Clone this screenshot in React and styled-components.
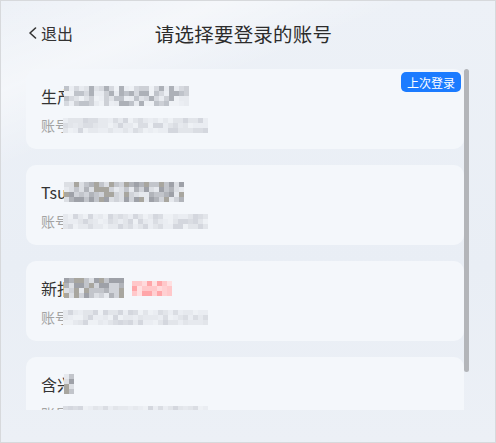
import styled, { createGlobalStyle } from 'styled-components'

const GlobalStyle = createGlobalStyle`
body{
  margin:0;
  font-family:"Noto Sans CJK SC", "Noto Sans", sans-serif;
}
`

const Frame = styled.div`
width:496px;
height:443px;
box-sizing:border-box;
border:1px solid #d7d9dc;
overflow:hidden;
background:
  linear-gradient(158deg, rgba(255,255,255,0) 0%, rgba(255,255,255,0.45) 14%, rgba(255,255,255,0) 26%),
  linear-gradient(180deg, #edf1f7 0%, #e9eef5 60%, #ecf0f6 100%);
`

const Header = styled.div`
height:68px;
box-sizing:border-box;
padding:0 36px 4px 27px;
display:grid;
grid-template-columns:1fr auto 1fr;
align-items:center;
`

const Back = styled.div`
display:flex;
align-items:center;
gap:4px;
font-size:16px;
color:#333;
svg{ display:block; }
`

const Title = styled.div`
font-size:19.5px;
color:#2c2c2c;
letter-spacing:0.2px;
`

const ListArea = styled.div`
margin-left:25px;
display:flex;
height:341px;
`

const Cards = styled.div`
width:438px;
overflow:hidden;
display:flex;
flex-direction:column;
gap:16px;
`

const ScrollTrack = styled.div`
width:5px;
flex:0 0 5px;
`

const ScrollThumb = styled.div`
height:303px;
border-radius:3px;
background:#b3b5b9;
`

const Card = styled.div`
position:relative;
flex:0 0 80px;
box-sizing:border-box;
padding:16px 15px 0;
border-radius:10px;
background:#f4f7fb;
`

const Badge = styled.span`
position:absolute;
top:3px;
right:3px;
height:20px;
padding:0 6px;
display:flex;
align-items:center;
border-radius:5px;
background:#1b7bff;
color:#fff;
font-size:12px;
`

const Name = styled.div`
display:flex;
align-items:center;
height:22px;
font-size:16px;
line-height:22px;
color:#333;
white-space:nowrap;
`

const Account = styled.div`
display:flex;
align-items:center;
margin-top:8px;
height:20px;
font-size:14px;
line-height:20px;
color:#a3a3a3;
white-space:nowrap;
`

const Mosaic = styled.span`
display:inline-block;
flex:none;
margin-left:${p => p.$pull || 0}px;
width:${p => p.$cols * 5}px;
height:${p => p.$rows * 5}px;
background-repeat:no-repeat;
filter:blur(0.7px);
`

// pixelated redaction blocks, built from a seeded palette
function mosaicBg(seed, cols, rows, palette) {
  let s = seed
  const rnd = () => {
    s = (s * 9301 + 49297) % 233280
    return s / 233280
  }
  const layers = []
  for (let r = 0; r < rows; r++) {
    const stops = []
    for (let c = 0; c < cols; c++) {
      const col = palette[Math.floor(rnd() * palette.length)]
      stops.push(`${col} ${c * 5}px ${c * 5 + 5}px`)
    }
    layers.push(`linear-gradient(90deg, ${stops.join(', ')}) 0 ${r * 5}px / 100% 5px no-repeat`)
  }
  return layers.join(', ')
}

const namePal = ['#e8ebf0', '#e0e3e8', '#d6d9df', '#cdd0d6', '#eff2f6', '#bfc3ca', '#adb1b8', '#ebeef3']
const darkPal = ['#e6e9ee', '#d0d3d9', '#b1b4ba', '#9ea1a8', '#dcdfe4', '#c2c5cb', '#a8a69f']
const subPal = ['#eaedf2', '#e2e5ea', '#dadde3', '#eef1f5', '#d4d7de', '#e6e9ee']
const redPal = ['#ffdadc', '#ffd0d2', '#ffe0e1', '#ffc8ca', '#ffa6a9']

const accounts = [
  { head: '生产', name: [11, 25, namePal], sub: [21, 29, subPal], last: true },
  { head: 'Tsu', name: [37, 24, darkPal], sub: [43, 29, subPal] },
  { head: '新报', name: [57, 12, darkPal], tag: [61, 8, redPal], sub: [67, 29, subPal] },
  { head: '含兴', name: [73, 2, darkPal], sub: [79, 29, subPal] },
]

function Chevron() {
  return (
    <svg width="9" height="12" viewBox="0 0 9 12">
      <polyline points="7.5,1 2,6 7.5,11" fill="none" stroke="#333" strokeWidth="1.6" strokeLinejoin="round" strokeLinecap="round" />
    </svg>
  )
}

export default function App() {
  return (
    <Frame>
      <GlobalStyle />
      <Header>
        <Back>
          <Chevron />
          <span>退出</span>
        </Back>
        <Title>请选择要登录的账号</Title>
        <div />
      </Header>
      <ListArea>
        <Cards>
          {accounts.map((a, i) => (
            <Card key={i}>
              {a.last && <Badge>上次登录</Badge>}
              <Name>
                <span>{a.head}</span>
                <Mosaic
                  $pull={a.head === 'Tsu' ? -3 : -9}
                  $cols={a.name[1]}
                  $rows={4}
                  style={{ background: mosaicBg(a.name[0], a.name[1], 4, a.name[2]) }}
                />
                {a.tag && (
                  <Mosaic
                    $pull={8}
                    $cols={a.tag[1]}
                    $rows={3}
                    style={{ background: mosaicBg(a.tag[0], a.tag[1], 3, a.tag[2]) }}
                  />
                )}
              </Name>
              <Account>
                <span>账号</span>
                <Mosaic
                  $pull={-6}
                  $cols={a.sub[1]}
                  $rows={3}
                  style={{ background: mosaicBg(a.sub[0], a.sub[1], 3, a.sub[2]) }}
                />
              </Account>
            </Card>
          ))}
        </Cards>
        <ScrollTrack>
          <ScrollThumb />
        </ScrollTrack>
      </ListArea>
    </Frame>
  )
}
